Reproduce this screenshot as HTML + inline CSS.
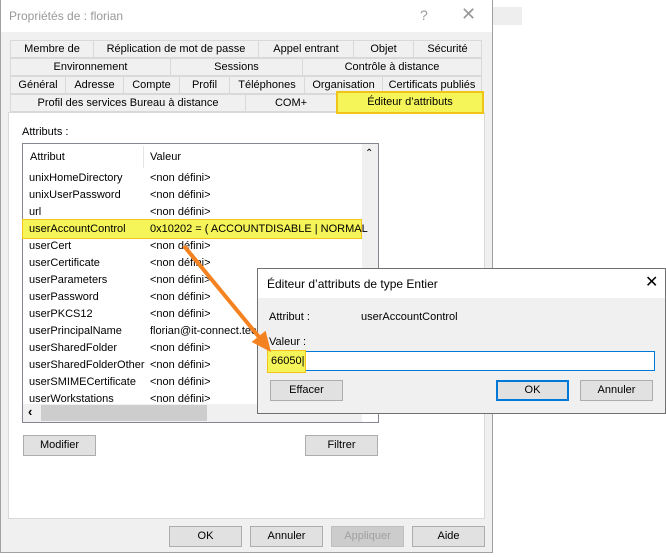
<!DOCTYPE html><html><head><meta charset="utf-8"><style>
body{margin:0;width:666px;height:557px;background:#fff;position:relative;overflow:hidden;font-family:"Liberation Sans",sans-serif;font-size:11px;color:#000}
.a{position:absolute;box-sizing:border-box}
.tab{position:absolute;box-sizing:border-box;border:1px solid #d9d9d9;background:#f0f0f0;text-align:center;line-height:17px;height:18px}
.btn{position:absolute;box-sizing:border-box;background:#e1e1e1;border:1px solid #adadad;text-align:center;line-height:18px;height:21px}
.r{position:absolute;left:29px;height:17px;line-height:17px}
.v{position:absolute;left:150px;height:17px;line-height:17px}
</style></head><body>
<div class="a" style="left:492px;top:7px;width:30px;height:18px;background:#eee"></div>
<div class="a" style="left:0;top:0;width:493px;height:553px;background:#f0f0f0;border:1px solid #a0a0a0"></div>
<div class="a" style="left:1px;top:0;width:491px;height:32px;background:#fff"></div>
<div class="a" style="left:9px;top:9px;color:#999;font-size:12px">Propriétés de : florian</div>
<div class="a" style="left:420px;top:7px;color:#999;font-size:14px">?</div>
<div class="a" style="left:461px;top:4px;color:#999;font-size:18px">✕</div>
<div class="tab" style="left:10px;top:40px;width:84px">Membre de</div>
<div class="tab" style="left:93px;top:40px;width:166px">Réplication de mot de passe</div>
<div class="tab" style="left:258px;top:40px;width:96px">Appel entrant</div>
<div class="tab" style="left:353px;top:40px;width:61px">Objet</div>
<div class="tab" style="left:413px;top:40px;width:69px">Sécurité</div>
<div class="tab" style="left:10px;top:58px;width:161px">Environnement</div>
<div class="tab" style="left:170px;top:58px;width:133px">Sessions</div>
<div class="tab" style="left:302px;top:58px;width:180px">Contrôle à distance</div>
<div class="tab" style="left:10px;top:76px;width:56px">Général</div>
<div class="tab" style="left:65px;top:76px;width:59px">Adresse</div>
<div class="tab" style="left:123px;top:76px;width:57px">Compte</div>
<div class="tab" style="left:179px;top:76px;width:51px">Profil</div>
<div class="tab" style="left:229px;top:76px;width:76px">Téléphones</div>
<div class="tab" style="left:304px;top:76px;width:79px">Organisation</div>
<div class="tab" style="left:382px;top:76px;width:100px">Certificats publiés</div>
<div class="tab" style="left:10px;top:94px;width:236px">Profil des services Bureau à distance</div>
<div class="tab" style="left:245px;top:94px;width:92px">COM+</div>
<div class="a" style="left:8px;top:112px;width:477px;height:407px;background:#fff;border:1px solid #d9d9d9"></div>
<div class="a" style="left:336px;top:91px;width:148px;height:23px;background:#f5f559;border:2px solid #f0c419;text-align:center;line-height:18px">Éditeur d’attributs</div>
<div class="a" style="left:22px;top:126px">Attributs :</div>
<div class="a" style="left:22px;top:143px;width:357px;height:280px;border:1px solid #828790;background:#fff"></div>
<div class="a" style="left:143px;top:146px;width:1px;height:22px;background:#e5e5e5"></div>
<div class="a" style="left:30px;top:151px">Attribut</div>
<div class="a" style="left:150px;top:151px">Valeur</div>
<div class="a" style="left:362px;top:144px;width:16px;height:260px;background:#f0f0f0"></div>
<div class="a" style="left:365px;top:148px;font-size:10px">⌃</div>
<div class="a" style="left:23px;top:404px;width:339px;height:18px;background:#f0f0f0"></div>
<div class="a" style="left:41px;top:405px;width:166px;height:16px;background:#cdcdcd"></div>
<div class="a" style="left:28px;top:404px;font-size:13px;font-weight:bold">‹</div>
<div class="a" style="left:22px;top:219px;width:340px;height:20px;background:#f5f559;border:1px solid #f0c419"></div>
<div class="r" style="top:170px">unixHomeDirectory</div><div class="v" style="top:170px">&lt;non défini&gt;</div>
<div class="r" style="top:187px">unixUserPassword</div><div class="v" style="top:187px">&lt;non défini&gt;</div>
<div class="r" style="top:204px">url</div><div class="v" style="top:204px">&lt;non défini&gt;</div>
<div class="r" style="top:221px">userAccountControl</div><div class="v" style="top:221px">0x10202 = ( ACCOUNTDISABLE | NORMAL</div>
<div class="r" style="top:238px">userCert</div><div class="v" style="top:238px">&lt;non défini&gt;</div>
<div class="r" style="top:255px">userCertificate</div><div class="v" style="top:255px">&lt;non défini&gt;</div>
<div class="r" style="top:272px">userParameters</div><div class="v" style="top:272px">&lt;non défini&gt;</div>
<div class="r" style="top:289px">userPassword</div><div class="v" style="top:289px">&lt;non défini&gt;</div>
<div class="r" style="top:306px">userPKCS12</div><div class="v" style="top:306px">&lt;non défini&gt;</div>
<div class="r" style="top:323px">userPrincipalName</div><div class="v" style="top:323px">florian@it-connect.tech</div>
<div class="r" style="top:340px">userSharedFolder</div><div class="v" style="top:340px">&lt;non défini&gt;</div>
<div class="r" style="top:357px">userSharedFolderOther</div><div class="v" style="top:357px">&lt;non défini&gt;</div>
<div class="r" style="top:374px">userSMIMECertificate</div><div class="v" style="top:374px">&lt;non défini&gt;</div>
<div class="r" style="top:391px">userWorkstations</div><div class="v" style="top:391px">&lt;non défini&gt;</div>
<div class="btn" style="left:23px;top:435px;width:73px">Modifier</div>
<div class="btn" style="left:305px;top:435px;width:73px">Filtrer</div>
<div class="btn" style="left:169px;top:526px;width:73px">OK</div>
<div class="btn" style="left:250px;top:526px;width:73px">Annuler</div>
<div class="btn" style="left:331px;top:526px;width:73px;color:#a0a0a0;background:#ccc;border-color:#bfbfbf">Appliquer</div>
<div class="btn" style="left:412px;top:526px;width:73px">Aide</div>
<!-- dialog -->
<div class="a" style="left:257px;top:268px;width:409px;height:146px;background:#f0f0f0;border:1px solid #707070"></div>
<div class="a" style="left:258px;top:269px;width:407px;height:29px;background:#fff"></div>
<div class="a" style="left:267px;top:277px;font-size:12px">Éditeur d’attributs de type Entier</div>
<div class="a" style="left:645px;top:272px;font-size:16px">✕</div>
<div class="a" style="left:269px;top:311px">Attribut :</div>
<div class="a" style="left:361px;top:311px">userAccountControl</div>
<div class="a" style="left:269px;top:336px">Valeur :</div>
<div class="a" style="left:268px;top:351px;width:387px;height:20px;background:#fff;border:1px solid #0078d7"></div>
<div class="a" style="left:267px;top:350px;width:39px;height:23px;background:#f5f559;border:1px solid #f0c419;line-height:20px;padding-left:3px">66050|</div>
<div class="btn" style="left:270px;top:380px;width:73px">Effacer</div>
<div class="btn" style="left:496px;top:380px;width:73px;border:2px solid #0078d7;line-height:17px">OK</div>
<div class="btn" style="left:580px;top:380px;width:73px">Annuler</div>
<svg class="a" style="left:0;top:0" width="666" height="557"><line x1="184" y1="246" x2="259" y2="337" stroke="#f58220" stroke-width="4"/><polygon points="271,352 265.6,330.8 251.6,342" fill="#f58220"/></svg>
</body></html>
